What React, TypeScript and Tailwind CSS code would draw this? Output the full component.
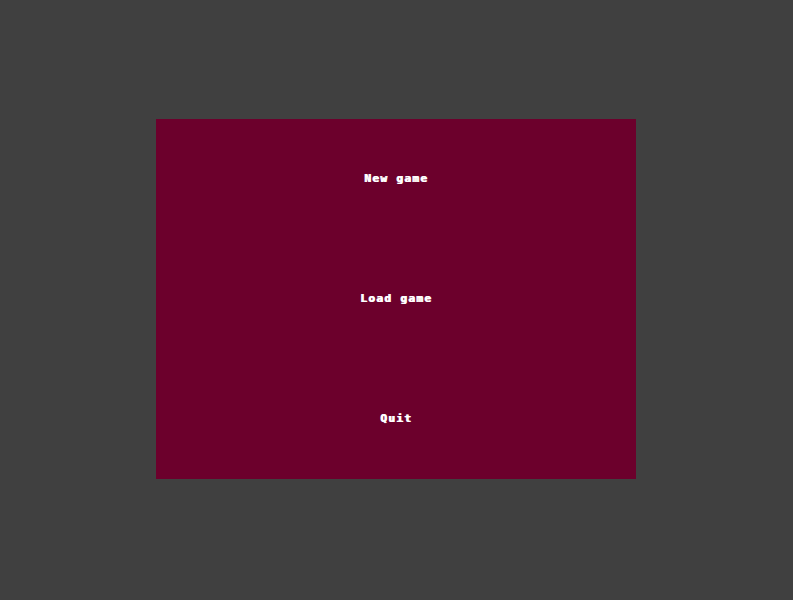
import React from "react";

const items = ["New game", "Load game", "Quit"];

export default function App() {
  return (
    <div className="h-[600px] w-full bg-[#404040] flex justify-center pt-[119px] pr-[1px]">
      <div className="w-[480px] h-[360px] bg-[#6c002c] grid grid-rows-3">
        {items.map((label) => (
          <div key={label} className="flex items-center justify-center pb-[2px]">
            <span className="text-white font-bold text-[11px] leading-none tracking-[1.4px] [text-shadow:1px_0_0_#ffffff] font-['DejaVu_Sans_Mono',monospace]">
              {label}
            </span>
          </div>
        ))}
      </div>
    </div>
  );
}
